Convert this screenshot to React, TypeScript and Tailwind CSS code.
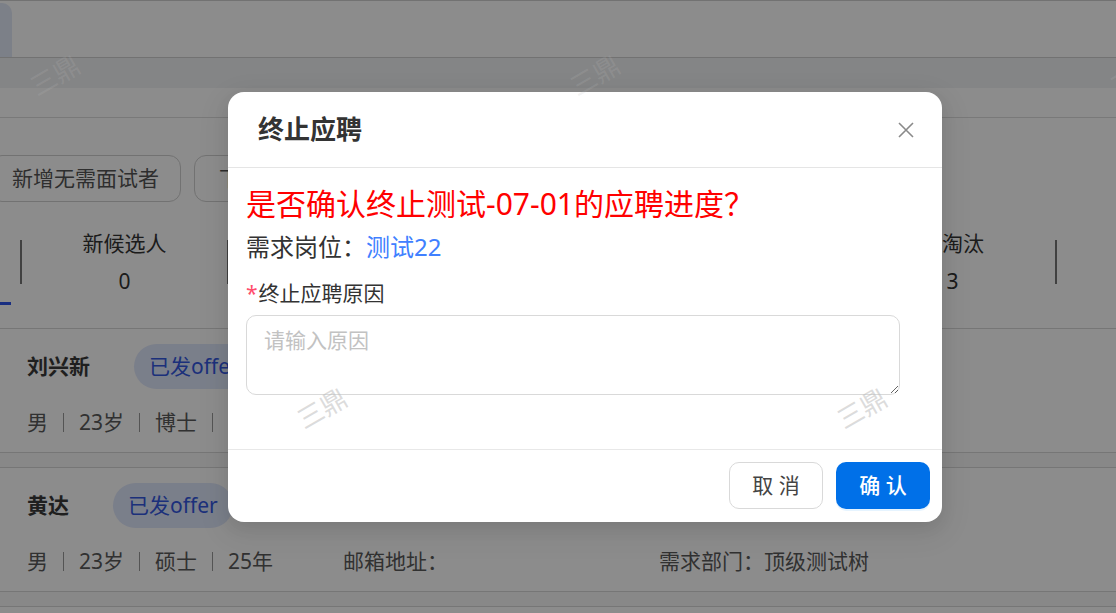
const stats = [
  { label: "新候选人", value: 0 },
  { label: "面试中", value: 2 },
  { label: "待发offer", value: 1 },
  { label: "已发offer", value: 2 },
  { label: "已淘汰", value: 3 },
]

const candidates = [
  { name: "刘兴新", degree: "博士", years: "25年" },
  { name: "黄达", degree: "硕士", years: "25年" },
]

// watermark tiles; the top row sits on the mask and barely shows
const marks = [
  { left: 26, top: 51, faint: true },
  { left: 566, top: 51, faint: true },
  { left: 1106, top: 51, faint: true },
  { left: 293, top: 384, faint: false },
  { left: 833, top: 384, faint: false },
]

function Sep() {
  return <span className="mx-[15px] h-[19px] w-px bg-[#9a9a9a]" />
}

function CandidateCard({ name, degree, years }: { name: string; degree: string; years: string }) {
  return (
    <div className="border-b border-[#d8d8d8] bg-white pl-[27px] pt-[15px] pb-[15px]">
      <div className="flex items-center gap-[44px]">
        <span className="text-[21px] font-bold text-[#3a3a3a]">{name}</span>
        <span className="flex h-[45px] items-center rounded-full bg-[#dfe7fb] px-[15px] text-[21px] text-[#3358e0]">已发offer</span>
      </div>
      <div className="mt-[18px] flex h-[30px] items-center text-[21px] leading-[30px] text-[#5a5a5a]">
        <div className="flex w-[316px] items-center">
          <span>男</span>
          <Sep />
          <span>23岁</span>
          <Sep />
          <span>{degree}</span>
          <Sep />
          <span>{years}</span>
        </div>
        <div className="w-[316px]">邮箱地址：</div>
        <div>需求部门：顶级测试树</div>
      </div>
    </div>
  )
}

export default function App() {
  return (
    <div className="relative h-[613px] w-[1116px] overflow-hidden bg-white font-['Noto_Sans','Noto_Sans_CJK_SC',sans-serif]">
      {/* page under the mask */}
      <div className="flex h-[58px] items-end border-y border-[#cfcfcf]">
        <div className="h-[54px] w-[12px] rounded-tr-[10px] bg-[#e2e9f8]" />
      </div>
      <div className="h-[30px] bg-[#f1f2f5]" />
      <div className="h-[30px] border-b border-[#dcdcdc]" />

      <div className="ml-[-10px] mt-[37px] flex gap-[13px]">
        <button className="h-[47px] rounded-[12px] border border-[#d0d0d0] px-[21px] text-[21px] text-[#555]">新增无需面试者</button>
        <button className="h-[47px] rounded-[12px] border border-[#d0d0d0] px-[24px] text-[21px] text-[#555]">下载简历模板</button>
      </div>

      <div className="ml-[20px] mt-[26px] flex items-center">
        <div className="h-[44px] w-[2px] bg-[#777]" />
        {stats.map((s) => (
          <div key={s.label} className="flex items-center">
            <div className="flex w-[205px] flex-col items-center text-[21px] text-[#333]">
              <span className="leading-[30px]">{s.label}</span>
              <span className="mt-[8px] leading-[30px]">{s.value}</span>
            </div>
            <div className="h-[44px] w-[2px] bg-[#777]" />
          </div>
        ))}
      </div>
      <div className="mt-[6px] h-[3px] w-[11px] bg-[#2f54eb]" />

      <div className="mt-[23px] border-t border-[#d8d8d8]">
        <CandidateCard {...candidates[0]} />
        <div className="h-[15px] border-b border-[#d8d8d8] bg-[#f7f7f7]" />
        <CandidateCard {...candidates[1]} />
        <div className="h-[15px] border-b border-[#d8d8d8] bg-[#f7f7f7]" />
      </div>

      {/* mask */}
      <div className="absolute inset-0 bg-black/45" />

      {/* dialog */}
      <div className="absolute left-[228px] top-[92px] flex w-[714px] flex-col rounded-[16px] bg-white shadow-[0_6px_16px_rgba(0,0,0,0.08),0_9px_28px_8px_rgba(0,0,0,0.05)]">
        <div className="flex h-[76px] items-center justify-between border-b border-[#e5e5e5] pl-[30px] pr-[28px]">
          <span className="text-[26px] font-bold text-[#333]">终止应聘</span>
          <svg width="16" height="16" viewBox="0 0 16 16" fill="none" stroke="#8a8a8a" strokeWidth="1.6">
            <path d="M1 1 15 15M15 1 1 15" />
          </svg>
        </div>
        <div className="flex flex-col pl-[18px] pt-[16px] pb-[54px]">
          <div className="text-[30px] leading-[40px] text-[#ff0000]">是否确认终止测试-07-01的应聘进度？</div>
          <div className="mt-[6px] text-[24px] leading-[34px] text-[#333]">
            需求岗位：<span className="text-[#4080ff]">测试22</span>
          </div>
          <div className="mt-[14px] flex items-center text-[21px] leading-[30px] text-[#333]">
            <span className="mr-[1px] text-[#ff4d6d]">*</span>终止应聘原因
          </div>
          <textarea
            placeholder="请输入原因"
            className="mt-[7px] h-[80px] w-[654px] rounded-[10px] border border-[#d9d9d9] px-[17px] py-[9px] text-[21px] leading-[30px] text-[#333] outline-none placeholder:text-[#c2c2c2]"
          />
        </div>
        <div className="flex justify-end gap-[13px] border-t border-[#e8e8e8] px-[12px] pt-[12px] pb-[13px]">
          <button className="h-[47px] w-[94px] rounded-[10px] border border-[#d9d9d9] bg-white text-[21px] text-[#444]">取 消</button>
          <button className="h-[47px] w-[94px] rounded-[10px] bg-[#0070e8] text-[21px] font-medium text-white shadow-[0_2px_0_rgba(5,145,255,0.1)]">确 认</button>
        </div>
      </div>

      {/* watermark */}
      <div className="pointer-events-none absolute inset-0">
        {marks.map((m, i) => (
          <div key={i} className="absolute flex h-[48px] w-[58px] items-center justify-center" style={{ left: m.left, top: m.top }}>
            <span
              className={`-rotate-30 whitespace-nowrap text-[26px] ${m.faint ? "text-[rgba(190,190,190,0.18)]" : "text-[rgba(190,190,190,0.55)]"}`}
            >
              三鼎
            </span>
          </div>
        ))}
      </div>
    </div>
  )
}
